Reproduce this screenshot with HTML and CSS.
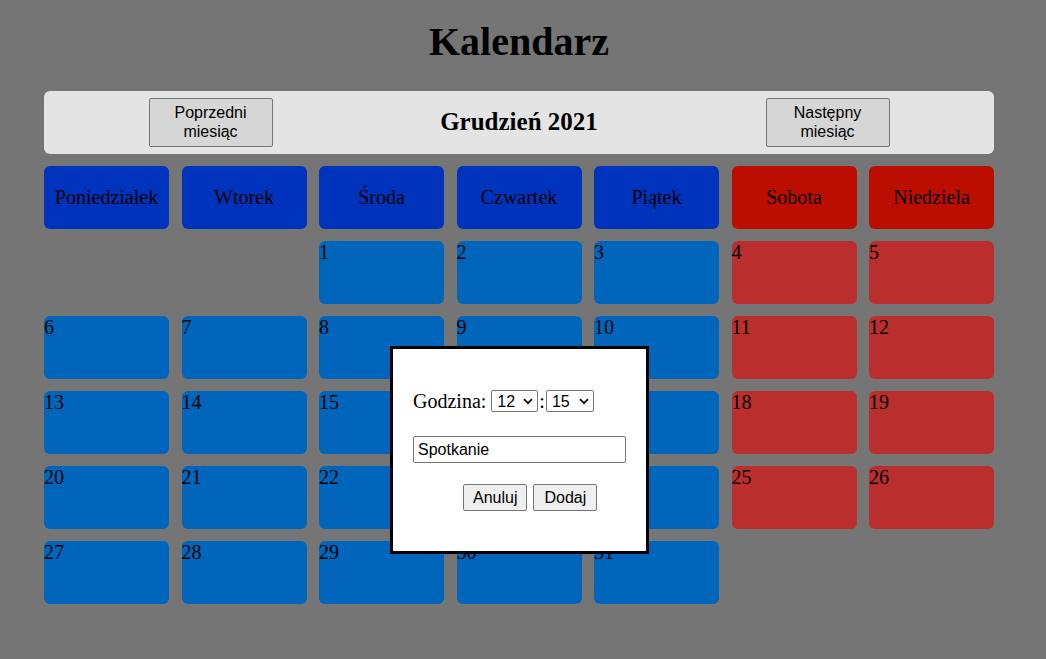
FILE: index.html
```html
<!DOCTYPE html>
<html lang="pl">
<head>
<meta charset="utf-8">
<title>Kalendarz</title>
<link rel="stylesheet" href="styles.css">
</head>
<body>
<div class="calendar">
  <h1 class="title">Kalendarz</h1>
  <div class="bar">
    <button class="nav-btn">Poprzedni miesiąc</button>
    <h2 class="month">Grudzień 2021</h2>
    <button class="nav-btn">Następny miesiąc</button>
  </div>
  <div class="grid">
    <div class="wd">Poniedziałek</div>
    <div class="wd">Wtorek</div>
    <div class="wd">Środa</div>
    <div class="wd">Czwartek</div>
    <div class="wd">Piątek</div>
    <div class="wd we">Sobota</div>
    <div class="wd we">Niedziela</div>

    <div class="empty"></div>
    <div class="empty"></div>
    <div class="day">1</div>
    <div class="day">2</div>
    <div class="day">3</div>
    <div class="day we">4</div>
    <div class="day we">5</div>

    <div class="day">6</div>
    <div class="day">7</div>
    <div class="day">8</div>
    <div class="day">9</div>
    <div class="day">10</div>
    <div class="day we">11</div>
    <div class="day we">12</div>

    <div class="day">13</div>
    <div class="day">14</div>
    <div class="day">15</div>
    <div class="day">16</div>
    <div class="day">17</div>
    <div class="day we">18</div>
    <div class="day we">19</div>

    <div class="day">20</div>
    <div class="day">21</div>
    <div class="day">22</div>
    <div class="day">23</div>
    <div class="day">24</div>
    <div class="day we">25</div>
    <div class="day we">26</div>

    <div class="day">27</div>
    <div class="day">28</div>
    <div class="day">29</div>
    <div class="day">30</div>
    <div class="day">31</div>
  </div>
</div>

<div class="modal">
  <div class="row-time">
    <label>Godzina:</label>
    <span class="sel-wrap">
      <select class="sel"><option>12</option></select>
      <svg class="chev" width="10" height="7" viewBox="0 0 10 7"><path d="M1 1.2 L5 5.2 L9 1.2" fill="none" stroke="#111" stroke-width="1.9"/></svg>
    </span><span class="colon">:</span><span class="sel-wrap sel-wide">
      <select class="sel"><option>15</option></select>
      <svg class="chev" width="10" height="7" viewBox="0 0 10 7"><path d="M1 1.2 L5 5.2 L9 1.2" fill="none" stroke="#111" stroke-width="1.9"/></svg>
    </span>
  </div>
  <input class="txt" type="text" value="Spotkanie">
  <div class="actions">
    <button class="act">Anuluj</button>
    <button class="act">Dodaj</button>
  </div>
</div>
</body>
</html>
```

FILE: styles.css
```css
html, body {
  margin: 0;
  padding: 0;
}
body {
  background: #757575;
  font-family: "Liberation Serif", "Times New Roman", serif;
  color: #000;
  position: relative;
  min-height: 659px;
}
.title {
  margin: 0;
  padding-top: 19px;
  height: 91px;
  box-sizing: border-box;
  text-align: center;
  font-size: 40px;
  line-height: 46px;
  font-weight: bold;
}
.calendar {
  width: 950px;
  margin-left: 44px;
}
.bar {
  height: 62.5px;
  background: #e4e4e4;
  border-radius: 6px;
  display: flex;
  align-items: center;
  justify-content: center;
}
.nav-btn {
  width: 124px;
  height: 49px;
  box-sizing: border-box;
  background: #d6d6d6;
  border: 1px solid #767676;
  border-radius: 2px;
  font-family: "Liberation Sans", Arial, sans-serif;
  font-size: 16px;
  line-height: 19px;
  color: #000;
  padding: 1px 6px;
}
.month {
  width: 493px;
  margin: 0;
  text-align: center;
  font-size: 25px;
  font-weight: bold;
}
.grid {
  margin-top: 12.5px;
  display: grid;
  grid-template-columns: repeat(7, 125px);
  grid-auto-rows: 62.5px;
  gap: 12.5px;
}
.wd {
  background: #0033bb;
  border-radius: 6px;
  display: flex;
  align-items: center;
  justify-content: center;
  font-size: 20px;
}
.wd.we {
  background: #bb0d00;
}
.day {
  background: #0066bb;
  border-radius: 6px;
  font-size: 20px;
  line-height: 23px;
}
.day.we {
  background: #bb2e2e;
}
.modal {
  position: absolute;
  left: 390px;
  top: 346px;
  width: 259px;
  height: 208px;
  box-sizing: border-box;
  background: #fff;
  border: 3px solid #000;
  padding: 41px 20px 0 20px;
  display: flex;
  flex-direction: column;
  align-items: flex-start;
}
.row-time {
  display: flex;
  align-items: center;
  height: 22px;
  font-size: 20px;
}
.row-time label {
  margin-right: 5px;
}
.sel-wrap {
  position: relative;
  display: inline-flex;
  width: 47px;
  height: 22px;
}
.sel-wrap.sel-wide {
  width: 48px;
}
.sel {
  -webkit-appearance: none;
  appearance: none;
  font-family: "Liberation Sans", Arial, sans-serif;
  font-size: 16px;
  color: #000;
  background: #fff;
  height: 22px;
  width: 100%;
  box-sizing: border-box;
  border: 1px solid #767676;
  border-radius: 2px;
  padding: 0 0 0 5px;
  margin: 0;
}
.chev {
  position: absolute;
  right: 5px;
  top: 8px;
  pointer-events: none;
}
.colon {
  margin: 0 1px 0 1px;
}
.txt {
  margin-top: 24px;
  width: 213px;
  height: 27px;
  box-sizing: border-box;
  font-family: "Liberation Sans", Arial, sans-serif;
  font-size: 16px;
  padding: 1px 4px;
  border: 1px solid #767676;
  border-radius: 2px;
}
.actions {
  margin-top: 21px;
  margin-left: 50px;
  display: flex;
  gap: 6px;
}
.act {
  height: 27px;
  box-sizing: border-box;
  font-family: "Liberation Sans", Arial, sans-serif;
  font-size: 16px;
  padding: 1px 9px;
  background: #efefef;
  border: 1px solid #767676;
  border-radius: 2px;
  color: #000;
}
.act + .act {
  padding: 1px 10px;
}
```
